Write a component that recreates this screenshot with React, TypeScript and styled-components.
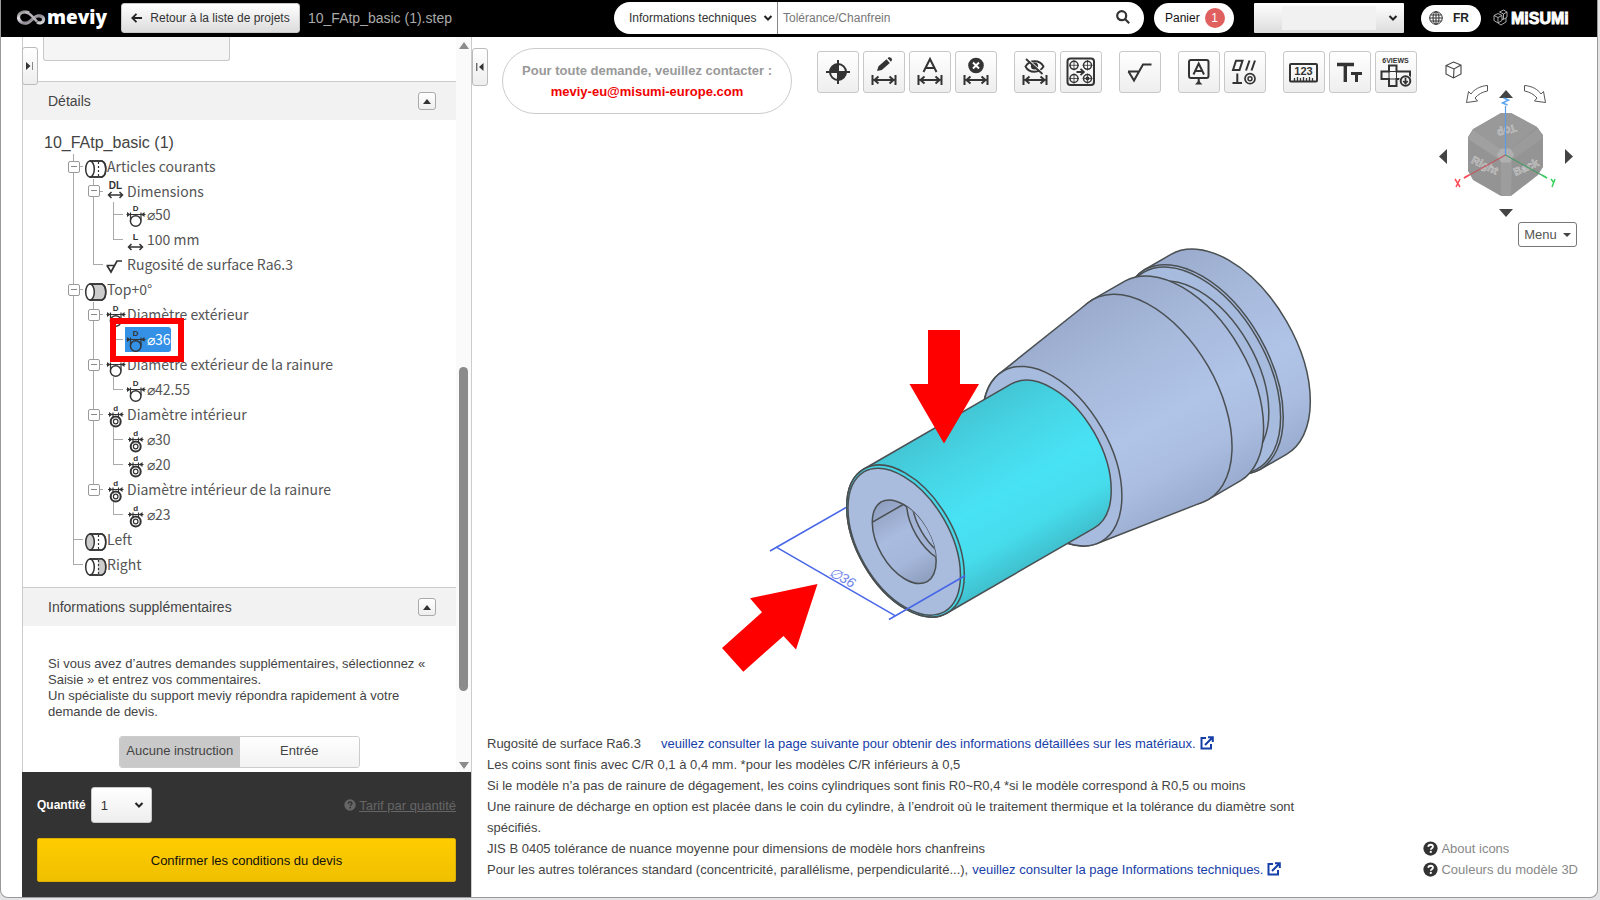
import React from "react";
import styled, { createGlobalStyle, css } from "styled-components";

const SANS = '"Liberation Sans", Arial, sans-serif';
const TREE = '"Noto Sans CJK JP", "Noto Sans", sans-serif';
const INK = "#333";

const Global = createGlobalStyle`
  * { box-sizing: border-box; }
  html, body { margin: 0; height: 100%; }
  body { background: #e4e4e6; font-family: ${SANS}; font-size: 13px; color: #444; }
  button, select, input { font-family: inherit; }
  svg { display: block; flex: none; }
`;

/* ---------- window and header ---------- */

const Window = styled.div`
  height: 100vh;
  padding: 0 2px 2px 0;
`;

const Frame = styled.div`
  height: 100%;
  display: flex;
  flex-direction: column;
  background: #fff;
  border: 1px solid #999;
  border-top: 0;
  border-radius: 0 0 8px 8px;
  overflow: hidden;
`;

const Header = styled.header`
  flex: none;
  height: 37px;
  display: flex;
  align-items: center;
  justify-content: space-between;
  background: #000;
  padding: 0 26px 1px 15px;
`;

const HeaderGroup = styled.div<{ $gap: number }>`
  display: flex;
  align-items: center;
  gap: ${(p) => p.$gap}px;
`;

const raised = css`
  background: linear-gradient(#fff, #eee);
  border: 1px solid #c8c8c8;
  border-radius: 3px;
`;

const BackButton = styled.button`
  ${raised}
  background: linear-gradient(#fff, #dcdcdc);
  height: 30px;
  width: 179px;
  display: flex;
  align-items: center;
  justify-content: center;
  gap: 8px;
  padding: 0;
  font-size: 12px;
  color: #333;
  margin-left: 13px;
`;

const FileName = styled.span`
  font-size: 14px;
  color: #aaa;
  margin-left: 8px;
  white-space: nowrap;
`;

const SearchBox = styled.form`
  display: flex;
  align-items: stretch;
  height: 32px;
  width: 530px;
  border-radius: 16px;
  background: #fff;
  overflow: hidden;
  margin: 0 10px 0 auto;
`;

const SelectShell = styled.span<{ $end: number }>`
  display: inline-grid;
  align-items: center;
  > * { grid-area: 1 / 1; }
  > svg { justify-self: end; margin-right: ${(p) => p.$end}px; pointer-events: none; }
`;

const PlainSelect = styled.select`
  appearance: none;
  border: 0;
  background: none;
  color: #333;
  height: 100%;
  width: 100%;
`;

const TopicSelect = styled(PlainSelect)`
  width: 164px;
  padding: 0 0 0 15px;
  font-size: 12px;
  border-right: 1px solid #888;
`;

const SearchInput = styled.input`
  flex: 1;
  min-width: 0;
  border: 0;
  outline: 0;
  padding: 0 5px;
  font-size: 12px;
  color: #333;
  &::placeholder { color: #777; opacity: 1; }
`;

const SearchButton = styled.button`
  border: 0;
  background: none;
  padding: 0 14px 2px 0;
  display: flex;
  align-items: center;
`;

const CartButton = styled.button`
  width: 80px;
  height: 30px;
  border: 0;
  border-radius: 15px;
  background: #fff;
  display: flex;
  align-items: center;
  gap: 5px;
  padding: 0 0 0 11px;
  font-size: 12px;
  color: #111;
`;

const Badge = styled.span`
  width: 20px;
  height: 20px;
  border-radius: 50%;
  background: #e06060;
  color: #fff;
  line-height: 20px;
  text-align: center;
`;

const AccountSelect = styled(PlainSelect)`
  width: 150px;
  height: 30px;
  background: linear-gradient(#fff, #dcdcdc);
  border-radius: 1px;
`;

const Redaction = styled.span`
  width: 94px;
  height: 24px;
  margin-left: 28px;
  background: #f1f1f1;
`;

const LangButton = styled.button`
  width: 60px;
  height: 27px;
  margin-left: 17px;
  border: 0;
  border-radius: 14px;
  background: #fff;
  display: flex;
  align-items: center;
  justify-content: space-between;
  padding: 0 12px 0 8px;
  font-weight: 700;
  font-size: 12px;
  color: #222;
`;

/* ---------- side panel ---------- */

const Body = styled.div`
  flex: 1;
  min-height: 0;
  display: flex;
`;

const Panel = styled.aside`
  position: relative;
  flex: none;
  width: 450px;
  margin-left: 21px;
  border-left: 1px solid #ccc;
  border-right: 1px solid #ccc;
  display: flex;
  flex-direction: column;
`;

const SideTab = styled.button`
  ${raised}
  border-color: #bbb;
  width: 16px;
  height: 38px;
  padding: 0;
  display: flex;
  align-items: center;
  justify-content: center;
`;

const PanelTab = styled(SideTab)`
  position: absolute;
  left: -1px;
  top: 10px;
  z-index: 2;
`;

const ScrollArea = styled.div`
  flex: 1;
  min-height: 0;
  display: flex;
  overflow: hidden;
`;

const ScrollContent = styled.div`
  flex: 1;
  min-width: 0;
`;

const CutButton = styled.button`
  ${raised}
  display: block;
  width: 187px;
  height: 24px;
  margin: 0 0 20px 20px;
  border-top: 0;
  border-radius: 0 0 3px 3px;
  background: #f5f5f5;
`;

const ScrollTrack = styled.div`
  width: 15px;
  background: #fafafa;
  display: flex;
  flex-direction: column;
  align-items: center;
  justify-content: space-between;
  padding: 5px 0 3px;
`;

const ScrollRail = styled.div`
  flex: 1;
  display: flex;
  flex-direction: column;
  justify-content: flex-end;
  padding-bottom: 71px;
`;

const Thumb = styled.div`
  width: 9px;
  height: 324px;
  border-radius: 5px;
  background: #8b8b8b;
`;

const SectionHead = styled.div`
  height: 39px;
  display: flex;
  align-items: center;
  justify-content: space-between;
  padding: 0 20px 0 25px;
  background: #f2f2f2;
  border-top: 1px solid #ccc;
`;

const SectionTitle = styled.h2`
  margin: 0;
  font-size: 14px;
  font-weight: 400;
  color: #444;
`;

const CollapseButton = styled.button`
  ${raised}
  border-color: #aaa;
  width: 18px;
  height: 18px;
  padding: 0;
  display: flex;
  align-items: center;
  justify-content: center;
`;

const TreeBox = styled.div`
  padding: 13px 0 10px 20px;
`;

const TreeTitle = styled.div`
  font-size: 16px;
  line-height: 20px;
  padding: 0 0 1px 1px;
`;

const TreeList = styled.ul`
  list-style: none;
  margin: 0;
  padding: 0 0 0 20px;
`;

const TreeRow = styled.li<{ $compact?: boolean }>`
  position: relative;
  display: flex;
  height: ${(p) => (p.$compact ? 23 : 25)}px;
  font-family: ${TREE};
  font-size: 14px;
  line-height: 24px;
  color: #555;
  white-space: nowrap;
`;

type GuideKind = "line" | "tee" | "end" | "none" | "box" | "boxLast";

const Guide = styled.span<{ $kind: GuideKind }>`
  width: 20px;
  display: flex;
  align-items: center;
  justify-content: center;
  background-repeat: no-repeat;
  background-image: ${(p) =>
    p.$kind === "none" ? "none" : "linear-gradient(#aaa, #aaa), linear-gradient(#aaa, #aaa)"};
  background-position: 10px 0, 10px 12px;
  background-size: 1px ${(p) => (p.$kind === "end" || p.$kind === "boxLast" ? "12px" : "100%")},
    ${(p) => (p.$kind === "line" ? "0 0" : "12px 1px")};
`;

const Toggle = styled.button`
  width: 12px;
  height: 12px;
  margin-left: 1px;
  padding: 0;
  border: 1px solid #999;
  border-radius: 2px;
  background: linear-gradient(#888, #888) center / 6px 1px no-repeat #fff;
`;

const NodeLabel = styled.span<{ $selected?: boolean }>`
  display: flex;
  border-radius: 3px;
  background: ${(p) => (p.$selected ? "linear-gradient(#3491e6, #3491e6) 2px 0 no-repeat" : "none")};
  color: ${(p) => (p.$selected ? "#fff" : "inherit")};
`;

const Highlight = styled.span`
  position: absolute;
  left: 47px;
  top: -9px;
  width: 74px;
  height: 44px;
  border: 6px solid #f00;
  z-index: 3;
`;

const Extra = styled.div`
  padding: 30px 25px 0;
`;

const ExtraText = styled.p`
  margin: 0;
  line-height: 16px;
`;

const Segments = styled.div`
  display: flex;
  width: 241px;
  height: 32px;
  margin: 16px auto 0 71px;
  border: 1px solid #ccc;
  border-radius: 3px;
  overflow: hidden;
`;

const Segment = styled.button<{ $on?: boolean }>`
  flex: 1;
  border: 0;
  padding: 0 0 3px;
  font-size: 13px;
  color: #444;
  background: ${(p) => (p.$on ? "#c9c9c9" : "linear-gradient(#fff, #f2f2f2)")};
`;

const OrderBar = styled.div`
  flex: none;
  height: 125px;
  margin-left: -1px;
  background: #333;
  padding: 15px;
  display: flex;
  flex-direction: column;
  justify-content: space-between;
`;

const OrderRow = styled.div`
  display: flex;
  align-items: center;
  justify-content: space-between;
`;

const QtyLabel = styled.label`
  display: flex;
  align-items: center;
  gap: 5px;
  color: #fff;
  font-weight: 700;
  font-size: 12px;
`;

const QtySelect = styled(PlainSelect)`
  ${raised}
  width: 61px;
  height: 36px;
  padding: 0 0 0 9px;
  font-size: 13px;
`;

const RateLink = styled.a`
  display: flex;
  align-items: center;
  gap: 3px;
  color: #666;
  text-decoration: underline;
`;

const ConfirmButton = styled.button`
  height: 44px;
  border: 1px solid #d9ae00;
  border-radius: 2px;
  background: linear-gradient(#ffcc00, #f0c000);
  color: #111;
  font-size: 13px;
`;

/* ---------- viewer ---------- */

const Viewer = styled.main`
  position: relative;
  flex: 1;
  min-width: 0;
  display: flex;
  flex-direction: column;
  padding-top: 11px;
`;

const TopRow = styled.div`
  display: flex;
  align-items: flex-start;
`;

const Contact = styled.div`
  width: 290px;
  height: 66px;
  margin-left: 14px;
  padding-top: 11px;
  border: 1px solid #ccc;
  border-radius: 33px;
  text-align: center;
  font-weight: 700;
  line-height: 21px;
  color: #999;
  white-space: nowrap;
`;

const MailLink = styled.a`
  display: block;
  color: #f00000;
  text-decoration: none;
`;

const Toolbar = styled.div`
  display: flex;
  gap: 17px;
  padding: 3px 0 0 25px;
`;

const ToolGroup = styled.div`
  display: flex;
  gap: 4px;
`;

const ToolButton = styled.button`
  ${raised}
  width: 42px;
  height: 42px;
  padding: 0;
  display: grid;
  place-items: center;
`;

const Stage = styled.div`
  flex: 1;
  min-height: 0;
  display: flex;
  align-items: center;
  justify-content: center;
`;

const Bottom = styled.div`
  display: flex;
  align-items: flex-end;
  justify-content: space-between;
  padding: 0 19px 17px 15px;
`;

const Notes = styled.div`
  width: 830px;
  line-height: 21px;
  p { margin: 0; }
`;

const NoteLink = styled.a<{ $indent?: boolean }>`
  color: #1640a8;
  text-decoration: none;
  margin-left: ${(p) => (p.$indent ? 20 : 4)}px;
  svg { display: inline-block; vertical-align: -2px; margin-left: 4px; }
`;

const HelpLinks = styled.div`
  display: flex;
  flex-direction: column;
  line-height: 21px;
`;

const HelpLink = styled.a`
  display: flex;
  align-items: center;
  gap: 3px;
  color: #888;
  text-decoration: none;
`;

const ViewNav = styled.div`
  position: absolute;
  top: 24px;
  right: 20px;
  width: 138px;
  display: flex;
  flex-direction: column;
`;

const NavRow = styled.div<{ $w: number }>`
  display: flex;
  align-items: center;
  justify-content: space-between;
  width: ${(p) => p.$w}px;
  margin: 0 auto;
`;

const NavInner = styled.div`
  width: 134px;
  display: flex;
  flex-direction: column;
`;

const NavButton = styled.button`
  border: 0;
  padding: 0;
  background: none;
  display: block;
`;

const HomeButton = styled(NavButton)`
  margin: 0 0 6px 6px;
  align-self: flex-start;
`;

const CubeSlot = styled.div`
  padding: 10px 0 12px;
`;

const MenuButton = styled.button`
  align-self: flex-end;
  margin-top: 5px;
  width: 59px;
  height: 25px;
  padding: 0;
  display: flex;
  align-items: center;
  justify-content: center;
  gap: 6px;
  background: #fff;
  border: 1px solid #777;
  border-radius: 3px;
  font-size: 13px;
  color: #555;
`;

/* ---------- icons ---------- */

const Chevron = ({ c = "#222" }: { c?: string }) => (
  <svg width="10" height="8" viewBox="0 0 10 8" fill="none" stroke={c} strokeWidth="2">
    <path d="M1.5 2 5 5.5 8.5 2" />
  </svg>
);

const Tri = ({ dir, w, h, c = INK }: { dir: "up" | "down" | "left" | "right"; w: number; h: number; c?: string }) => {
  const pts = {
    up: `0,${h} ${w},${h} ${w / 2},0`,
    down: `0,0 ${w},0 ${w / 2},${h}`,
    left: `${w},0 ${w},${h} 0,${h / 2}`,
    right: `0,0 0,${h} ${w},${h / 2}`,
  }[dir];
  return (
    <svg width={w} height={h} viewBox={`0 0 ${w} ${h}`}>
      <polygon points={pts} fill={c} />
    </svg>
  );
};

const Question = ({ size, c, mark }: { size: number; c: string; mark: string }) => (
  <svg width={size} height={size} viewBox="0 0 16 16">
    <circle cx="8" cy="8" r="7.6" fill={c} />
    <path d="M5.6 6.3c.1-1.5 1.1-2.3 2.5-2.3s2.5.8 2.5 2c0 1.6-2.2 1.7-2.2 3.2" fill="none" stroke={mark} strokeWidth="1.9" />
    <circle cx="8.3" cy="11.6" r="1.2" fill={mark} />
  </svg>
);

const External = () => (
  <svg width="14" height="14" viewBox="0 0 14 14" fill="none" stroke="#1640a8" strokeWidth="2">
    <path d="M6 2H1.5v10.5H11V8M5 9l7-7M8 1.2h4.8V6" />
  </svg>
);

const MeviyLogo = () => (
  <svg width="92" height="30" viewBox="0 0 92 30" role="img" aria-label="meviy">
    <defs>
      <linearGradient id="ribbon" x1="0" y1="0" x2="1" y2="1">
        <stop offset="0" stopColor="#777" />
        <stop offset=".3" stopColor="#e8e4ea" />
        <stop offset=".6" stopColor="#8c868e" />
        <stop offset="1" stopColor="#ddd" />
      </linearGradient>
    </defs>
    <path
      d="M13 10C7.500 7.500 2.500 9.500 2.500 14.200S7.500 21.500 12 19.500C16 17.500 17.500 14 21.500 13c3.700-.8 6.500 1.200 6 4.200-.5 2.800-4 3.500-6.500 1.800"
      fill="none"
      stroke="url(#ribbon)"
      strokeWidth="3.200"
    />
    <path d="M10 9.500c4.500 0 7 5.500 11 9" fill="none" stroke="#b9b4bb" strokeWidth="2.500" />
    <text x="31" y="21" fontFamily='"Open Sans", sans-serif' fontWeight="800" fontSize="19" fill="#fff">
      meviy
    </text>
  </svg>
);

const MisumiLogo = () => (
  <svg width="78" height="24" viewBox="0 0 78 24" role="img" aria-label="MiSUMi">
    <g fill="none" stroke="#bbb" strokeWidth=".9">
      <path d="M1 9.500 5 7.500l4 2v5l-4 2.500-4-2.500zM1 9.500l4 2 4-2M5 11.500v5.500M6.500 6 10.500 4 14 6v5l-3.500 2.500L9 13M6.500 6l4 2L14 6M10.500 8v5M5 17l3 2 5-3v-4" />
    </g>
    <text x="18" y="18" fontFamily={SANS} fontWeight="700" fontSize="16" fill="#fff" stroke="#fff" strokeWidth=".9">
      MiSUMi
    </text>
  </svg>
);

const Globe = () => (
  <svg width="14" height="14" viewBox="0 0 14 14" fill="none" stroke="#333" strokeWidth="1">
    <circle cx="7" cy="7" r="6.300" />
    <ellipse cx="7" cy="7" rx="3" ry="6.300" />
    <path d="M7 .7v12.600M.7 7h12.600M1.500 4h11M1.500 10h11" />
  </svg>
);

/* shared horizontal dimension glyph for the toolbar */
const Span = () => (
  <path d="M9.500 24v10M32.500 24v10M11.500 29h19M15.500 25.500l-4 3.500 4 3.500M26.500 25.500l4 3.500-4 3.500" strokeWidth="2" />
);

const ToolSvg = ({ children }: { children: React.ReactNode }) => (
  <svg width="40" height="40" viewBox="1 1 40 40" fill="none" stroke={INK} strokeWidth="2">
    {children}
  </svg>
);

const tools: { label: string; art: React.ReactNode }[][] = [
  [
    {
      label: "Origine",
      art: (
        <>
          <circle cx="21" cy="21" r="8" />
          <path d="M21 21V13a8 8 0 0 0-8 8zM21 21v8a8 8 0 0 0 8-8z" fill={INK} stroke="none" />
          <path d="M21 9v24M9 21h24" />
        </>
      ),
    },
    {
      label: "Modifier la cote",
      art: (
        <>
          <path d="M14 20l1.500-4.800 8-7 3.300 3.700-8 7zM24.600 7.300l1.400-1.200 2.400.8.700 2-1.200 1.800z" fill={INK} stroke="none" />
          <Span />
        </>
      ),
    },
    { label: "Cote automatique", art: (<><path d="M14.500 21 21 8l6.500 13M17 17h8" /><Span /></>) },
    {
      label: "Supprimer la cote",
      art: (
        <>
          <circle cx="21" cy="14.500" r="7.800" fill={INK} stroke="none" />
          <path d="M18 11.500l6 6M24 11.500l-6 6" stroke="#fff" />
          <Span />
        </>
      ),
    },
  ],
  [
    {
      label: "Masquer la cote",
      art: (
        <>
          <path d="M11.500 15.500c4-7 14.500-7 18 0-4 7-14.500 7-18 0z" strokeWidth="1.800" />
          <circle cx="20.500" cy="15" r="3.600" fill={INK} stroke="none" />
          <path d="M13.500 8 30 23" stroke="#fff" strokeWidth="1.500" />
          <path d="M12 8l16.500 15" strokeWidth="1.800" />
          <Span />
        </>
      ),
    },
    {
      label: "Groupe de perçages",
      art: (
        <>
          <rect x="7.500" y="7.500" width="26.500" height="26.500" rx="3" />
          <g strokeWidth="1.500">
            <circle cx="14" cy="14.300" r="4" />
            <circle cx="27.500" cy="14.300" r="4" />
            <circle cx="14" cy="27.500" r="4" />
            <circle cx="27.500" cy="27.500" r="4" />
          </g>
          <path d="M14 9v10.500M9 14.300h10M27.500 9v10.500M22.500 14.300h10M14 22.500v10M9 27.500h10M27.500 22.500v10M22.500 27.500h10" strokeWidth=".8" />
          <circle cx="27.500" cy="27.500" r="2" fill={INK} stroke="none" />
          <path d="M16.500 21h7M20.500 17.800l3.400 3.200-3.400 3.200" strokeWidth="1.800" />
        </>
      ),
    },
  ],
  [{ label: "Rugosité", art: <path d="M9 20.500h11.500M9.500 20.500l5.500 9 9-16h8.500" /> }],
  [
    {
      label: "Annotation",
      art: (
        <>
          <rect x="11" y="9" width="19.500" height="18" rx="2" />
          <path d="M15.500 23.500l5.200-11 5.300 11M17.500 20h6.500M20.700 27v5" strokeWidth="2" />
          <path d="M17 33.500l3.700-4 3.700 4z" fill={INK} stroke="none" />
        </>
      ),
    },
    {
      label: "Tolérance géométrique",
      art: (
        <>
          <path d="M9 19l3-9.300h6.500L15.500 19zM22 19.500l3.500-10M27.500 19.500l3.500-10M13.300 22.500v9.500M8.500 32h9.500" />
          <circle cx="26" cy="27.700" r="5" strokeWidth="1.700" />
          <circle cx="26" cy="27.700" r="2" strokeWidth="1.500" />
        </>
      ),
    },
  ],
  [
    {
      label: "Mesure",
      art: (
        <>
          <rect x="7" y="13" width="27" height="17.500" rx="1" />
          <path d="M11.500 30v-3M14.500 30v-4M17.500 30v-3M20.500 30v-4M23.500 30v-3M26.500 30v-4M29.500 30v-3" strokeWidth="1.300" />
          <text x="20.500" y="24" textAnchor="middle" fontSize="11" fontWeight="700" fontFamily={SANS} fill={INK} stroke="none">
            123
          </text>
        </>
      ),
    },
    {
      label: "Taille du texte",
      art: (
        <>
          <path d="M8 13.500h17M16.300 13.500V31" strokeWidth="3.400" />
          <path d="M22 22.500h11M27.500 22.500V31" strokeWidth="3" />
        </>
      ),
    },
    {
      label: "6 vues",
      art: (
        <>
          <text x="20.500" y="11.500" textAnchor="middle" fontSize="7" fontWeight="700" fontFamily={SANS} fill={INK} stroke="none">
            6VIEWS
          </text>
          <path d="M14 14.500h7.500v6H35V28H21.500v7H14v-7H6.500v-7.500H14z" />
          <path d="M14 20.500h7.500V28H14z" strokeWidth="1" />
          <circle cx="30.500" cy="30" r="6.500" fill="#f2f2f2" stroke="none" />
          <circle cx="30.500" cy="30" r="4.800" />
          <path d="M30.500 26.800v5M28.300 30l2.200 2.400 2.200-2.400" strokeWidth="1.700" />
        </>
      ),
    },
  ],
];

/* ---------- tree ---------- */

type IconKind = "cylOpen" | "cylFull" | "cylLeft" | "cylRight" | "DL" | "L" | "D" | "Dg" | "d" | "rough";

const letter = { textAnchor: "middle" as const, fontFamily: SANS, fontWeight: 700, fill: INK, stroke: "none" };

const NodeIcon = ({ kind }: { kind: IconKind }) => {
  let art: React.ReactNode = null;
  if (kind.startsWith("cyl")) {
    art = (
      <>
        <path d="M7 7h12c5 2 5 14 0 16H7z" fill={kind === "cylFull" ? "#ccc" : "#fff"} />
        {kind === "cylRight" && <path d="M15 7h4c5 2 5 14 0 16h-4z" fill="#ccc" stroke="none" />}
        <ellipse cx="7" cy="15" rx="4.300" ry="8" fill={kind === "cylLeft" ? "#ccc" : "#fff"} />
        {kind !== "cylFull" && <path d="M15.500 8v14" strokeDasharray="2 2" strokeWidth="1.200" />}
        <path d="M7 7h12c5 2 5 14 0 16H7" />
      </>
    );
  } else if (kind === "DL" || kind === "L") {
    const y = kind === "DL" ? 16 : 20;
    art = (
      <>
        <text {...letter} x="12.500" y={kind === "DL" ? 10 : 13} fontSize={kind === "DL" ? 10 : 9}>
          {kind}
        </text>
        <path d={`M5.500 ${y}h14M8.500 ${y - 3}l-3 3 3 3M16.500 ${y - 3}l3 3-3 3`} />
      </>
    );
  } else if (kind === "rough") {
    art = <path d="M3.500 13.500h8l-3.500 6.500-4-6.500M8 20l6-11h5" strokeWidth="1.700" />;
  } else if (kind === "D" || kind === "Dg") {
    art = (
      <>
        <text {...letter} x="12.700" y="9" fontSize="8">
          D
        </text>
        <path d="M3.500 12.500h19M7.500 10.500v8M18 10.500v8" strokeWidth="1.200" />
        <path d="M4 10l3.500 2.500L4 15zM21.500 10 18 12.500l3.500 2.500z" fill={INK} stroke="none" />
        <circle cx="12.700" cy="19" r="5.300" fill="none" />
      </>
    );
  } else {
    art = (
      <>
        <text {...letter} x="12.700" y="9" fontSize="8">
          d
        </text>
        <path d="M5 12.500h15.500M10 10.500v6M15.500 10.500v6" strokeWidth="1.200" />
        <path d="M6 10l3.500 2.500L6 15zM19.500 10 16 12.500l3.500 2.500z" fill={INK} stroke="none" />
        <circle cx="12.700" cy="19.500" r="5" strokeWidth="2" />
        <circle cx="12.700" cy="19.500" r="2.300" strokeWidth="1.200" />
      </>
    );
  }
  return (
    <svg width="24" height="25" viewBox="0 0 24 25" fill="none" stroke={INK} strokeWidth="1.500" overflow="visible">
      {art}
    </svg>
  );
};

type Node = { g: GuideKind[]; icon: IconKind; text: string; compact?: boolean; selected?: boolean };

const nodes: Node[] = [
  { g: ["box"], icon: "cylOpen", text: "Articles courants" },
  { g: ["line", "box"], icon: "DL", text: "Dimensions", compact: true },
  { g: ["line", "line", "tee"], icon: "D", text: "⌀50" },
  { g: ["line", "line", "end"], icon: "L", text: "100 mm" },
  { g: ["line", "end"], icon: "rough", text: "Rugosité de surface Ra6.3" },
  { g: ["box"], icon: "cylFull", text: "Top+0°" },
  { g: ["line", "box"], icon: "D", text: "Diamètre extérieur" },
  { g: ["line", "line", "end"], icon: "D", text: "⌀36", selected: true },
  { g: ["line", "box"], icon: "Dg", text: "Diamètre extérieur de la rainure" },
  { g: ["line", "line", "end"], icon: "Dg", text: "⌀42.55" },
  { g: ["line", "box"], icon: "d", text: "Diamètre intérieur" },
  { g: ["line", "line", "tee"], icon: "d", text: "⌀30" },
  { g: ["line", "line", "end"], icon: "d", text: "⌀20" },
  { g: ["line", "boxLast"], icon: "d", text: "Diamètre intérieur de la rainure" },
  { g: ["line", "none", "end"], icon: "d", text: "⌀23" },
  { g: ["tee"], icon: "cylLeft", text: "Left" },
  { g: ["end"], icon: "cylRight", text: "Right" },
];

/* ---------- 3D model: isometric turned part, lengths in mm ---------- */

const PX = 4.617; // screen px of the major radius for 1 mm
const FLAT = 0.577; // minor/major ratio of an isometric circle
const COS = Math.cos(Math.PI / 6);
const SIN = 0.5;
const AXIAL = PX * 0.8165;
const O = { x: 905.5, y: 541 };

const at = (t: number, u = 0, v = 0) => ({
  x: O.x + (t * AXIAL + u) * COS + v * SIN,
  y: O.y - (t * AXIAL + u) * SIN + v * COS,
});
const pt = (p: { x: number; y: number }) => `${p.x.toFixed(1)} ${p.y.toFixed(1)}`;

const ring = (t: number, r: number) => {
  const a = r * PX;
  const b = a * FLAT;
  return `M${pt(at(t, 0, -a))}A${b} ${a} -30 0 1 ${pt(at(t, 0, a))}A${b} ${a} -30 0 1 ${pt(at(t, 0, -a))}Z`;
};

const solid = (t1: number, r1: number, t2: number, r2: number) => {
  const a1 = r1 * PX;
  const a2 = r2 * PX;
  const n = (a1 - a2) / (((t2 - t1) * AXIAL) / FLAT);
  const m = Math.sqrt(1 - n * n);
  const p = (t: number, a: number, s: number) => pt(at(t, a * n * FLAT, s * a * m));
  const far = n < 0 ? 1 : 0;
  const near = n > 0 ? 1 : 0;
  return (
    `M${p(t1, a1, -1)}L${p(t2, a2, -1)}A${a2 * FLAT} ${a2} -30 ${far} 1 ${p(t2, a2, 1)}` +
    `L${p(t1, a1, 1)}A${a1 * FLAT} ${a1} -30 ${near} 1 ${p(t1, a1, -1)}Z`
  );
};

const Shade = ({ id, r, stops }: { id: string; r: number; stops: [number, string][] }) => {
  const p = at(0, 0, -r * PX);
  const q = at(0, 0, r * PX);
  return (
    <linearGradient id={id} gradientUnits="userSpaceOnUse" x1={p.x} y1={p.y} x2={q.x} y2={q.y}>
      {stops.map(([o, c]) => (
        <stop key={o} offset={o} stopColor={c} />
      ))}
    </linearGradient>
  );
};

const Model = () => (
  <svg width="669" height="520" viewBox="700 164 669 520" role="img" aria-label="Modèle 3D">
    <defs>
      <Shade id="steel" r={25} stops={[[0, "#9aabcd"], [0.25, "#a6b8da"], [0.6, "#b0c4e8"], [0.8, "#abbee2"], [1, "#9aacd0"]]} />
      <Shade id="cyan" r={18} stops={[[0, "#43c6d5"], [0.25, "#46d6e6"], [0.55, "#48e2f5"], [0.8, "#46dcec"], [1, "#40c0ce"]]} />
      <Shade id="bore" r={10} stops={[[0, "#8e9ebf"], [0.4, "#a9bbdf"], [0.7, "#a5b7db"], [1, "#8d9dbd"]]} />
      <clipPath id="boreClip"><path d={ring(-0.4, 10)} /></clipPath>
      <clipPath id="deepClip"><path d={ring(10, 10)} /></clipPath>
    </defs>
    <g stroke="#4a4f52" strokeWidth="1.500" strokeLinejoin="round">
      <path d={solid(91, 25, 99, 25)} fill="url(#steel)" />
      <path d={ring(91, 25)} fill="#a7bbde" />
      <path d={ring(90.3, 24.6)} fill="#a7bbde" />
      <path d={ring(90, 21.6)} fill="#a7bbde" />
      <path d={solid(75, 25, 85, 25)} fill="url(#steel)" />
      <path d={solid(45, 21.3, 75, 25)} fill="url(#steel)" />
      <path d={ring(45, 21.3)} fill="#a7bbde" />
      <path d={solid(0, 18, 45, 18)} fill="url(#cyan)" />
      <path d={ring(0, 18)} fill="#46d6e6" />
      <path d={ring(-0.4, 17.5)} fill="#a9bcde" />
      <path d={ring(-0.4, 10)} fill="url(#bore)" />
      <g clipPath="url(#boreClip)" fill="none">
        <path d="M870 523.500 904 504" />
        <path d={ring(10, 10)} fill="#a2b3d6" />
        <g clipPath="url(#deepClip)" strokeWidth="1.500">
          <path d={ring(12, 10)} fill="#a9bbdf" />
          <path d={ring(14.500, 10)} fill="#8d9bb8" />
          <path d={ring(16, 10)} fill="#a2b3d6" />
        </g>
      </g>
    </g>
    <g stroke="#4766e8" strokeWidth="1.500" fill="none">
      <path d="M846 507.500 770 551M776.700 547.300 895 615.700M889 619.500 965.300 575.500" />
    </g>
    <text x="842" y="582" textAnchor="middle" transform="rotate(30 842 578)" fontFamily={SANS} fontStyle="italic" fontSize="14" fill="#6f86ea">
      ∅36
    </text>
    <g fill="#f00">
      <path d="M928 330h32v54h19l-35 59.500L909.500 384H928z" />
      <path d="M817.500 584 796 649.500 783.500 636 743.300 671.700 722 648 762 612.300 750 598.300z" />
    </g>
  </svg>
);

const ViewCube = () => (
  <svg width="76" height="84" viewBox="0 0 76 84" overflow="visible" role="img" aria-label="Orientation">
    <path d="M33 0h10l26 14 6 8v32l-5 8-27 21H33L5 67l-5-9V24l5-8z" fill="#949494" />
    <path d="M33 0h10l26 14-27 22h-9L5 17z" fill="#999" />
    <path d="M5 17l28 19-1 11L0 26z" fill="#a0a0a0" />
    <path d="M70 15 43 36l1 11 31-22z" fill="#9b9b9b" />
    <path d="M33 47h11l-1 36H33z" fill="#9d9d9d" />
    <path d="M33 35.500h9l4 6-4 8h-9l-4-8z" fill="#b0b0b0" />
    <g fontFamily={SANS} fontSize="11" fontWeight="700" fill="#aaa" stroke="#d4d4d4" strokeWidth=".4" textAnchor="middle">
      <text transform="translate(17 52) rotate(26)" y="4">Right</text>
      <text transform="translate(58 54) rotate(-24)" y="4">Back</text>
      <text transform="translate(39 18) rotate(160)" y="4">Top</text>
    </g>
    <path d="M37.500 42V-7" stroke="#5b9be8" strokeWidth="1.200" />
    <path d="M37.500 42-4 65" stroke="#c05a60" strokeWidth="1.200" />
    <path d="M37.500 42 79 65" stroke="#4b9a66" strokeWidth="1.200" />
    <path d="M-4 65l5-3" stroke="#ff4a55" strokeWidth="1.500" />
    <path d="M79 65l-5-3" stroke="#3ad25e" strokeWidth="1.500" />
    <g fill="none" strokeWidth="1.500">
      <path d="M-13 66l5 8M-8 66l-4 8" stroke="#ff4a55" />
      <path d="M83 66l3 4M87 66l-3 8" stroke="#3ad25e" />
      <path d="M35.500 -15l5 2-6 3 5 2" stroke="#5aa5f5" />
    </g>
  </svg>
);

const RotateArrow = ({ flip }: { flip?: boolean }) => (
  <svg width="22" height="18" viewBox="0 0 22 18" fill="#fff" stroke="#555" strokeWidth="1">
    <path
      d="M21.500.5C14 1 8 4.500 5 9L2.500 6.500.500 17.500l11-1.500L9 13c3-3.500 7-6 12.500-7z"
      transform={flip ? "translate(22 0) scale(-1 1)" : undefined}
    />
  </svg>
);

/* ---------- page ---------- */

export default function App() {
  return (
    <Window>
      <Global />
      <Frame>
        <Header>
          <HeaderGroup $gap={0}>
            <MeviyLogo />
            <BackButton>
              <svg width="11" height="10" viewBox="0 0 11 10" fill="none" stroke="#222" strokeWidth="1.800">
                <path d="M11 5H1.500M5.500.8 1.300 5l4.200 4.200" />
              </svg>
              Retour à la liste de projets
            </BackButton>
            <FileName>10_FAtp_basic (1).step</FileName>
          </HeaderGroup>
          <SearchBox onSubmit={(e) => e.preventDefault()}>
            <SelectShell $end={5}>
              <TopicSelect aria-label="Rubrique">
                <option>Informations techniques</option>
              </TopicSelect>
              <Chevron />
            </SelectShell>
            <SearchInput aria-label="Recherche" placeholder="Tolérance/Chanfrein" />
            <SearchButton aria-label="Rechercher">
              <svg width="14" height="14" viewBox="0 0 14 14" fill="none" stroke={INK} strokeWidth="2.200">
                <circle cx="5.700" cy="5.700" r="4.500" />
                <path d="M9 9l4.200 4.200" />
              </svg>
            </SearchButton>
          </SearchBox>
          <HeaderGroup $gap={0}>
            <HeaderGroup $gap={20}>
              <CartButton>
                Panier <Badge>1</Badge>
              </CartButton>
              <SelectShell $end={6}>
                <AccountSelect aria-label="Compte">
                  <option></option>
                </AccountSelect>
                <Redaction />
                <Chevron />
              </SelectShell>
            </HeaderGroup>
            <HeaderGroup $gap={12}>
              <LangButton>
                <Globe />
                FR
              </LangButton>
              <MisumiLogo />
            </HeaderGroup>
          </HeaderGroup>
        </Header>

        <Body>
          <Panel>
            <PanelTab aria-label="Déplier">
              <svg width="8" height="8" viewBox="0 0 8 8">
                <path d="M0 0l4.500 4L0 8z" fill={INK} />
                <path d="M6.500 0v8" stroke="#888" />
              </svg>
            </PanelTab>
            <ScrollArea>
              <ScrollContent>
                <CutButton aria-label="Réglages" />
                <SectionHead>
                  <SectionTitle>Détails</SectionTitle>
                  <CollapseButton aria-label="Replier Détails">
                    <Tri dir="up" w={8} h={5} />
                  </CollapseButton>
                </SectionHead>
                <TreeBox>
                  <TreeTitle>10_FAtp_basic (1)</TreeTitle>
                  <TreeList>
                    {nodes.map((n, i) => (
                      <TreeRow key={i} $compact={n.compact}>
                        {n.g.map((k, j) => (
                          <Guide key={j} $kind={k}>
                            {k.startsWith("box") && <Toggle aria-label={`Replier ${n.text}`} />}
                          </Guide>
                        ))}
                        <NodeLabel $selected={n.selected}>
                          <NodeIcon kind={n.icon} />
                          {n.text}
                        </NodeLabel>
                        {n.selected && <Highlight />}
                      </TreeRow>
                    ))}
                  </TreeList>
                </TreeBox>
                <SectionHead>
                  <SectionTitle>Informations supplémentaires</SectionTitle>
                  <CollapseButton aria-label="Replier Informations supplémentaires">
                    <Tri dir="up" w={8} h={5} />
                  </CollapseButton>
                </SectionHead>
                <Extra>
                  <ExtraText>Si vous avez d’autres demandes supplémentaires, sélectionnez « Saisie » et entrez vos commentaires.</ExtraText>
                  <ExtraText>Un spécialiste du support meviy répondra rapidement à votre demande de devis.</ExtraText>
                  <Segments>
                    <Segment $on>Aucune instruction</Segment>
                    <Segment>Entrée</Segment>
                  </Segments>
                </Extra>
              </ScrollContent>
              <ScrollTrack>
                <Tri dir="up" w={10} h={7} c="#8b8b8b" />
                <ScrollRail>
                  <Thumb />
                </ScrollRail>
                <Tri dir="down" w={10} h={7} c="#8b8b8b" />
              </ScrollTrack>
            </ScrollArea>
            <OrderBar>
              <OrderRow>
                <QtyLabel>
                  Quantité
                  <SelectShell $end={8}>
                    <QtySelect defaultValue="1">
                      <option>1</option>
                      <option>2</option>
                    </QtySelect>
                    <Chevron />
                  </SelectShell>
                </QtyLabel>
                <RateLink href="#tarif">
                  <Question size={12} c="#666" mark="#333" />
                  Tarif par quantité
                </RateLink>
              </OrderRow>
              <ConfirmButton>Confirmer les conditions du devis</ConfirmButton>
            </OrderBar>
          </Panel>

          <Viewer>
            <TopRow>
              <SideTab aria-label="Replier">
                <svg width="8" height="8" viewBox="0 0 8 8">
                  <path d="M7.500 0 3 4l4.500 4z" fill={INK} />
                  <path d="M.800 0v8" stroke={INK} />
                </svg>
              </SideTab>
              <Contact>
                Pour toute demande, veuillez contacter :
                <MailLink href="mailto:meviy-eu@misumi-europe.com">meviy-eu@misumi-europe.com</MailLink>
              </Contact>
              <Toolbar>
                {tools.map((group, i) => (
                  <ToolGroup key={i}>
                    {group.map((t) => (
                      <ToolButton key={t.label} aria-label={t.label}>
                        <ToolSvg>{t.art}</ToolSvg>
                      </ToolButton>
                    ))}
                  </ToolGroup>
                ))}
              </Toolbar>
            </TopRow>

            <Stage>
              <Model />
            </Stage>

            <ViewNav>
              <NavInner>
                <HomeButton aria-label="Vue isométrique">
                  <svg width="17" height="18" viewBox="0 0 17 18" fill="none" stroke="#444" strokeWidth="1.100">
                    <path d="M8.500 1 16 4v9l-7.500 4L1 13V4.500zM1 4.500 9 8l7-4M9 8l-.5 9" />
                  </svg>
                </HomeButton>
                <NavRow $w={80}>
                  <NavButton aria-label="Pivoter à gauche">
                    <RotateArrow />
                  </NavButton>
                  <NavButton aria-label="Haut">
                    <Tri dir="up" w={14} h={8} c="#444" />
                  </NavButton>
                  <NavButton aria-label="Pivoter à droite">
                    <RotateArrow flip />
                  </NavButton>
                </NavRow>
                <NavRow $w={134}>
                  <NavButton aria-label="Gauche">
                    <Tri dir="left" w={8} h={15} c="#444" />
                  </NavButton>
                  <CubeSlot>
                    <ViewCube />
                  </CubeSlot>
                  <NavButton aria-label="Droite">
                    <Tri dir="right" w={8} h={15} c="#444" />
                  </NavButton>
                </NavRow>
                <NavRow $w={14}>
                  <NavButton aria-label="Bas">
                    <Tri dir="down" w={14} h={8} c="#444" />
                  </NavButton>
                </NavRow>
              </NavInner>
              <MenuButton>
                Menu <Tri dir="down" w={8} h={4} c="#444" />
              </MenuButton>
            </ViewNav>

            <Bottom>
              <Notes>
                <p>
                  Rugosité de surface Ra6.3
                  <NoteLink $indent href="#materiaux">
                    veuillez consulter la page suivante pour obtenir des informations détaillées sur les matériaux.
                    <External />
                  </NoteLink>
                </p>
                <p>Les coins sont finis avec C/R 0,1 à 0,4 mm. *pour les modèles C/R inférieurs à 0,5</p>
                <p>Si le modèle n’a pas de rainure de dégagement, les coins cylindriques sont finis R0~R0,4 *si le modèle correspond à R0,5 ou moins</p>
                <p>Une rainure de décharge en option est placée dans le coin du cylindre, à l’endroit où le traitement thermique et la tolérance du diamètre sont spécifiés.</p>
                <p>JIS B 0405 tolérance de nuance moyenne pour dimensions de modèle hors chanfreins</p>
                <p>
                  Pour les autres tolérances standard (concentricité, parallélisme, perpendicularité...),
                  <NoteLink href="#techniques">
                    veuillez consulter la page Informations techniques.
                    <External />
                  </NoteLink>
                </p>
              </Notes>
              <HelpLinks>
                <HelpLink href="#icons">
                  <Question size={15} c="#333" mark="#fff" />
                  About icons
                </HelpLink>
                <HelpLink href="#couleurs">
                  <Question size={15} c="#333" mark="#fff" />
                  Couleurs du modèle 3D
                </HelpLink>
              </HelpLinks>
            </Bottom>
          </Viewer>
        </Body>
      </Frame>
    </Window>
  );
}
